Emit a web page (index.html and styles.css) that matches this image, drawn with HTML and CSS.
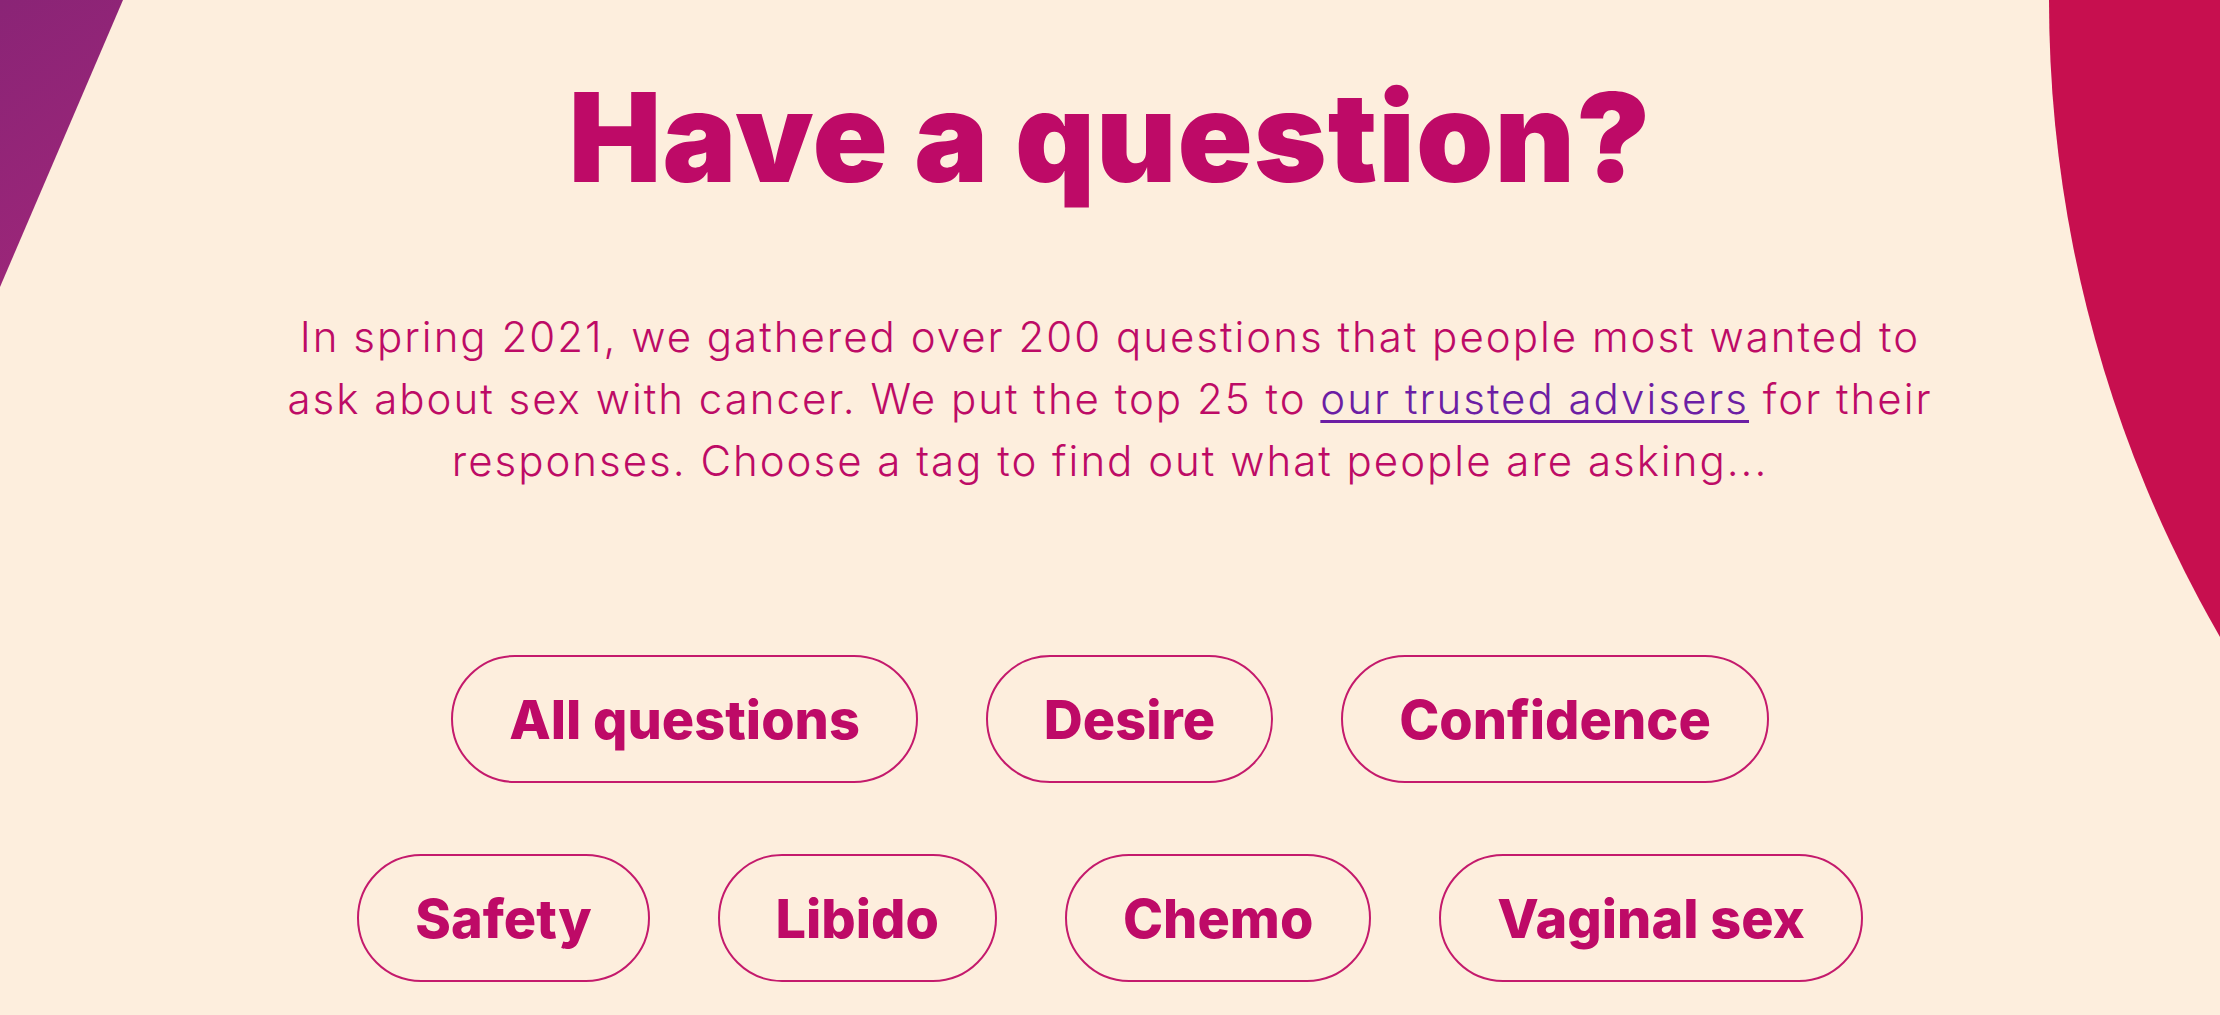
FILE: index.html
```html
<!DOCTYPE html>
<html lang="en">
<head>
<meta charset="utf-8">
<title>Have a question?</title>
<link rel="stylesheet" href="styles.css">
</head>
<body>
<div class="page">
  <svg class="blob-left" width="140" height="300" viewBox="0 0 140 300" aria-hidden="true">
    <defs>
      <linearGradient id="gl" x1="0" y1="0" x2="0.3" y2="1">
        <stop offset="0" stop-color="#8a2476"/>
        <stop offset="1" stop-color="#9c2679"/>
      </linearGradient>
    </defs>
    <polygon points="0,0 123,0 0,287" fill="url(#gl)"/>
  </svg>
  <div class="blob-right" aria-hidden="true"></div>

  <section class="intro">
    <h1 class="title">Have a question?</h1>
    <p class="lead">In spring 2021, we gathered over 200 questions that people most wanted to ask about sex with cancer. We put the top 25 to <a href="#" class="lead-link">our trusted advisers</a> for their responses. Choose a tag to find out what people are asking...</p>
    <div class="tags">
      <button class="tag">All questions</button>
      <button class="tag">Desire</button>
      <button class="tag">Confidence</button>
      <button class="tag">Safety</button>
      <button class="tag">Libido</button>
      <button class="tag">Chemo</button>
      <button class="tag">Vaginal sex</button>
    </div>
  </section>
</div>
</body>
</html>
```

FILE: styles.css
```css
html, body {
  margin: 0;
  padding: 0;
}
body {
  background: #fdeedd;
  font-family: Inter, "Noto Sans", sans-serif;
  color: #be0a67;
  overflow: hidden;
}
.page {
  position: relative;
  width: 2220px;
  height: 1015px;
  overflow: hidden;
}
.blob-left {
  position: absolute;
  left: 0;
  top: 0;
}
.blob-right {
  position: absolute;
  left: 2049px;
  top: -1272px;
  width: 2544px;
  height: 2544px;
  border-radius: 50%;
  background: #c70f4f;
}
.intro {
  position: relative;
  display: flex;
  flex-direction: column;
  align-items: center;
  padding-top: 74px;
}
.title {
  margin: 0;
  font-family: Inter, sans-serif;
  font-weight: 900;
  font-size: 124px;
  line-height: 126px;
  letter-spacing: 1px;
  color: #be0a67;
}
.lead {
  margin: 106px 0 0;
  max-width: 1680px;
  text-align: center;
  font-family: Inter, sans-serif;
  font-weight: 300;
  font-size: 42px;
  line-height: 62px;
  letter-spacing: 2px;
  color: #bd0b66;
}
.lead-link {
  color: #6c1ea4;
  text-decoration: underline;
  text-decoration-thickness: 3px;
  text-underline-offset: 6px;
}
.tags {
  margin-top: 163px;
  max-width: 1620px;
  display: flex;
  flex-wrap: wrap;
  justify-content: center;
  column-gap: 68px;
  row-gap: 71px;
}
.tag {
  box-sizing: border-box;
  height: 128px;
  padding: 0 56px;
  border: 2px solid #c41a6c;
  border-radius: 64px;
  background: transparent;
  font-family: Inter, sans-serif;
  font-weight: 800;
  font-size: 54px;
  color: #be0a67;
  display: flex;
  align-items: center;
  cursor: pointer;
}
```
